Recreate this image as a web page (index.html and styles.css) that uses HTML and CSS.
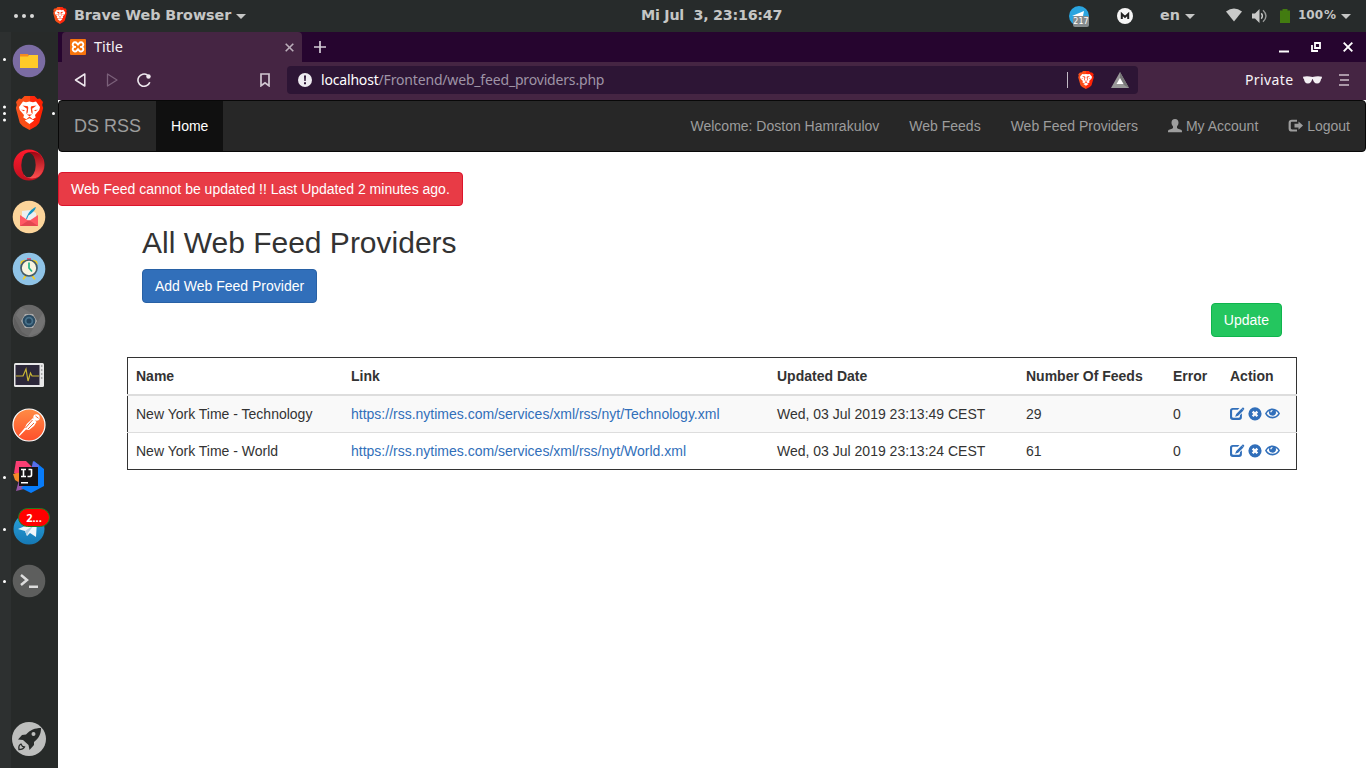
FILE: index.html
```html
<!DOCTYPE html>
<html lang="en">
<head>
<meta charset="utf-8">
<title>Title</title>
<link rel="stylesheet" href="styles.css">
</head>
<body>
<svg class="defs" width="0" height="0">
  <defs>
    <linearGradient id="brave-fill" x1="0" x2="1"><stop offset="0" stop-color="#f4511e"/><stop offset=".5" stop-color="#ff4b12"/><stop offset=".51" stop-color="#ff2a10"/><stop offset="1" stop-color="#ff2000"/></linearGradient>
    <linearGradient id="opera-fill" x1="0" x2="0" y1="0" y2="1"><stop offset="0" stop-color="#ff1b2d"/><stop offset="1" stop-color="#c0101f"/></linearGradient>
    <linearGradient id="opera-side" x1="0" x2="0" y1="0" y2="1"><stop offset="0" stop-color="#9c0612"/><stop offset="1" stop-color="#ff5050"/></linearGradient>
    <linearGradient id="post-fill" x1="0" x2="0" y1="0" y2="1"><stop offset="0" stop-color="#ff8c45"/><stop offset="1" stop-color="#ff4f2b"/></linearGradient>
    <linearGradient id="tele-fill" x1="0" x2="0" y1="0" y2="1"><stop offset="0" stop-color="#2ba3dc"/><stop offset="1" stop-color="#1679b5"/></linearGradient>
  </defs>
  <symbol id="brave" viewBox="0 0 28 34">
    <path fill="url(#brave-fill)" d="M9 0h10l3 3 2.500-.4L27.500 6l-.8 3 1 3-4 15-3 3.200L14 34l-6.700-3.800-3-3.200L.3 12l1-3L.5 6l3-3.400L6 3z"/>
    <path fill="#fff" d="M7.500 5.500l3 .8 3.500-.8 3.500.8 3-.8 4 5.500-.7 3-4.300 5 .7 2.500-3 1.800L14 20.500l-3.200 2.800-3-1.800.7-2.500-4.300-5-.7-3z"/>
    <path fill="#fff" d="M9.300 24.500L14 22.300l4.700 2.200L14 28z"/>
    <path fill="#ff3a12" d="M7 9.600l5.300.6.500 1.600-.6 4.700-1.100 1.700-.2-2.400.5-3zM21 9.600l-5.300.6-.5 1.600.6 4.700 1.100 1.700.2-2.400-.5-3zM11.300 18.500h5.400L14 20.200z"/>
    <path fill="#ff3a12" d="M5.500 13.800l3.800.2-.8 1.300zM22.500 13.800l-3.800.2.800 1.300z"/>
  </symbol>
  <symbol id="user" viewBox="0 0 14 14"><path d="M7 0c2.400 0 3.500 1.500 3.500 3.600 0 1.700-.6 2.900-1.500 3.800v1.500l1 .8 3 1.100c.7.300 1 .8 1 1.700v.8H0v-.8c0-.9.300-1.400 1-1.700l3-1.100 1-.8V7.400c-.9-.9-1.500-2.100-1.500-3.800C3.500 1.500 4.600 0 7 0z"/></symbol>
  <symbol id="logout" viewBox="0 0 15 14"><path d="M9 .8v2H4.200c-1 0-1.400.4-1.400 1.300v5c0 .9.400 1.300 1.400 1.300H9v2.200H3.900C1.800 12.600.6 11.500.6 9.400V3.900C.6 1.900 1.800.8 3.900.8zM10.500 2.400L15 6.600l-4.500 4.200V8.400H6.500V4.800h4z"/></symbol>
  <symbol id="edit" viewBox="0 0 15 14"><path d="M9.500.9L7.800 2.800H3.400c-.8 0-1.300.4-1.300 1.200v5.600c0 .8.500 1.200 1.300 1.200h5.300c.8 0 1.200-.4 1.200-1.200V8.200l2-1.900v3.900c0 1.800-1 2.700-2.800 2.700H2.800C1 12.900 0 12 0 10.200V3.700C0 1.800 1 .9 2.800.9z"/><path d="M11.600 1.500l1.900 1.900-5.400 5.400-3 1 1.100-2.900zM12.400.8c.9-.8 2.500.7 1.700 1.700l-.6.5-1.700-1.600z"/></symbol>
  <symbol id="remove" viewBox="0 0 14 14"><path fill-rule="evenodd" d="M7 .2a6.600 6.600 0 1 1 0 13.200A6.600 6.600 0 0 1 7 .2zM3.800 5.400L5.300 6.900 3.800 8.400l1.700 1.700L7 8.600l1.500 1.500 1.700-1.700-1.500-1.500 1.500-1.500-1.700-1.700L7 5.200 5.500 3.700z"/></symbol>
  <symbol id="eye" viewBox="0 0 15 14"><path fill-rule="evenodd" d="M7.500 1.500c3.500 0 6.100 2.300 7.500 5-1.400 2.900-4 4.900-7.500 4.900S1.400 9.400 0 6.500c1.400-2.700 4-5 7.500-5zM4.300 4C3.200 4.600 2.300 5.500 1.700 6.500c1.200 2 3.200 3.300 5.800 3.300s4.600-1.300 5.800-3.300c-.6-1-1.500-1.900-2.600-2.500 1 2.700-.6 4.700-3.200 4.700S3.300 6.700 4.300 4zM7.500 3c-1.500 0-2.200.9-2.200 2.200h1.300c0-.7.300-1 .9-1.100z"/></symbol>
</svg>

<header class="topbar">
  <span class="activities"><i></i><i></i><i></i></span>
  <svg class="app-logo" width="14" height="17"><use href="#brave"/></svg>
  <span class="app-name">Brave Web Browser</span><i class="caret"></i>
  <span class="clock">Mi Jul&nbsp; 3, 23:16:47</span>
  <div class="tray">
    <span class="tray-tele"><svg width="21" height="21" viewBox="0 0 21 21"><circle cx="10" cy="10" r="10" fill="#2aa5e0"/><path fill="#fff" d="M3 10l12-5-1 5z"/></svg><b>217</b></span>
    <svg class="tray-m" width="16" height="16" viewBox="0 0 16 16"><circle cx="8" cy="8" r="8" fill="#f5f5f5"/><path d="M4.800 11V6L8 9l3.200-3v5" fill="none" stroke="#222" stroke-width="2"/></svg>
    <span class="lang">en</span><i class="caret"></i>
    <svg class="wifi" width="16" height="14" viewBox="0 0 16 14"><path fill="#c8c9c8" d="M0 3.500Q8-2.500 16 3.500L8 13.500z"/></svg>
    <svg class="sound" width="16" height="14" viewBox="0 0 16 14"><path fill="#c8c9c8" d="M0 4.500h3L7.500 0v14L3 9.500H0z"/><path fill="none" stroke="#c8c9c8" stroke-width="1.400" d="M9.300 4.300q2.200 2.700 0 5.400"/><path fill="none" stroke="#999b9a" stroke-width="1.400" d="M11 1.300q6 5.700 0 11.400"/></svg>
    <svg class="battery" width="10" height="14" viewBox="0 0 10 14"><path fill="#427b10" d="M0 1.500h2.500V0h5v1.500H10V14H0z"/></svg>
    <span class="percent">100<span>%</span></span><i class="caret"></i>
  </div>
</header>

<div class="desktop">
  <nav class="dock">
    <div class="slot one"><svg width="34" height="34" viewBox="0 0 34 34"><circle cx="17" cy="17" r="16.300" fill="#7b6ca3"/><path fill="#f58a1f" d="M8 10h8l1 2v3H8z"/><path fill="#ffca28" d="M8 12.500h8l1-1.500h9v13H8z"/></svg></div>
    <div class="slot three focus"><svg width="29" height="34" viewBox="0 0 28 34"><use href="#brave"/></svg></div>
    <div class="slot"><svg width="34" height="34" viewBox="0 0 34 34"><circle cx="17" cy="17" r="15.500" fill="url(#opera-fill)"/><path fill="url(#opera-side)" d="M12 6.500C16 3 22 3 27.500 6A15.500 15.500 0 0 1 27 28.500C22 31.500 16 31 12 27.500z"/><ellipse cx="16.500" cy="17" rx="7.200" ry="12.300" fill="#272a29"/></svg></div>
    <div class="slot"><svg width="34" height="34" viewBox="0 0 34 34"><circle cx="17" cy="17" r="16.300" fill="#fcd59b"/><path fill="#eceff1" d="M10 11l9-1 5 3v9H10z"/><path fill="#ff5964" d="M8 15l9 6 9-6v11H8z"/><path fill="#e34650" d="M8 26l9-6 9 6z"/><path fill="#1595c5" d="M14 19C16 13 19 9 24 7c-1 4-4 6-7.500 8.500L15 19z"/></svg></div>
    <div class="slot"><svg width="34" height="34" viewBox="0 0 34 34"><circle cx="17" cy="17" r="16.300" fill="#8fc3e6"/><g fill="#f2cc25"><path d="M8 12.500L9 9l4-1.500 1 2zM26 12.500L25 9l-4-1.500-1 2zM13 23l-2.500 4 1.500.7 3-4zM21 23l2.500 4-1.500.7-3-4z"/></g><path fill="#d9577b" d="M15 6h4v3h-4z"/><circle cx="17" cy="16" r="8" fill="#f8f3df" stroke="#455a64" stroke-width="1.700"/><path d="M17 10.500V16l3 3.500" fill="none" stroke="#24b588" stroke-width="1.700"/></svg></div>
    <div class="slot"><svg width="34" height="34" viewBox="0 0 34 34"><circle cx="17" cy="17" r="16.300" fill="#696969"/><path fill="#737373" d="M9 3l12 7-12 7-5-6zM31 9l-9 14-6 10 12-5 5-11z"/><path fill="#5f5f5f" d="M2 13l8 15 8 5-10-3-6-8z"/><path fill="#aaa" d="M13 10h8l4 7-4 7h-8l-4-7z"/><circle cx="17" cy="17" r="6.300" fill="#294a61"/><circle cx="17" cy="17" r="4.300" fill="#48718a"/><circle cx="17" cy="17" r="2.500" fill="#234259"/></svg></div>
    <div class="slot monitor"><svg width="34" height="34" viewBox="0 0 34 34"><rect x="2" y="5" width="30" height="24" rx="1.500" fill="#e7e7e7"/><rect x="3.500" y="7" width="24" height="20" fill="#2c2739"/><path d="M4 18h7l3-7 2 12 2.500-8 1.500 3H27" fill="none" stroke="#c9b635" stroke-width="1.200"/><path stroke="#aaa" d="M29.700 7v14" stroke-width="1.500" stroke-dasharray="2 2"/></svg></div>
    <div class="slot"><svg width="34" height="34" viewBox="0 0 34 34"><circle cx="17" cy="17" r="16" fill="url(#post-fill)" stroke="#fff" stroke-width="1.200"/><circle cx="24.500" cy="9.500" r="3.200" fill="#fff"/><path fill="#fff" d="M21 10l3.500 4-2.500 4-5 4-3-.5L7.500 28l-.8-.8 6-7.200 2-4z"/><path d="M23.500 8l3 2.300M20.500 12l-7 8M22 15l-6 6" stroke="#f26435" fill="none"/></svg></div>
    <div class="slot low one"><svg width="34" height="34" viewBox="0 0 34 34"><path fill="#fa3e73" d="M4 1h10l6 6-8 11-10-5z"/><path fill="#f58b27" d="M1 14l10-2v13l-8-5z"/><path fill="#9856a7" d="M4 31l3-11 13 7z"/><path fill="#087cfa" d="M22 1l10 8v17L19 33 9 28l10-9z"/><path fill="#5a6ee8" d="M21 1l6 4-3 14-5-8z"/><rect x="7" y="7" width="19" height="19" fill="#151315"/><path d="M9 9.500h5M11.500 9v8M9 16.500h5M19.500 9v6q0 1.500-2 1.500H15.500M16.500 9.500h3" fill="none" stroke="#fff" stroke-width="1.600"/><path fill="#fff" d="M9 22h7v1.500H9z"/></svg></div>
    <div class="slot low one"><svg width="34" height="34" viewBox="0 0 34 34"><circle cx="17" cy="17" r="15.500" fill="url(#tele-fill)"/><path fill="#f2f7fb" d="M6 17L25 9l-1 16-6-4-3 3-2-5z"/><path fill="#b1cfe3" d="M13 19l9-6-6 8-1 3z"/></svg><b class="count">2...</b></div>
    <div class="slot low one"><svg width="34" height="34" viewBox="0 0 34 34"><circle cx="17" cy="17" r="16.300" fill="#5d5e5d"/><path d="M9 11l6 5-6 5" fill="none" stroke="#ddd" stroke-width="2.500"/><path fill="#ddd" d="M17 21.500h9V24h-9z"/></svg></div>
    <div class="slot apps"><svg width="34" height="34" viewBox="0 0 34 34"><circle cx="17" cy="17" r="17" fill="#bdbebd"/><path fill="#272a29" fill-rule="evenodd" d="M29 6c0 6-2 10-7 14v3l-4.500 5-1-5-5.500-5-5-.5L10 13l4-.5C18 8 23 6 29 6zM21.500 10a2 2 0 1 0 0 4 2 2 0 0 0 0-4z"/><path d="M9 22c-2 1-2.500 3-2 5.500 3 0 4.500-.5 5.500-2.500l-2-.5z" fill="none" stroke="#272a29" stroke-width="1.300"/></svg></div>
  </nav>

  <section class="browser">
    <div class="tabs">
      <div class="tab">
        <svg width="16" height="16" viewBox="0 0 16 16"><rect width="16" height="16" rx="1" fill="#f7740c"/><path d="M6 7.900H5a2.300 2.300 0 1 1 1.800-3.700L8 5.600l1.200-1.400A2.300 2.300 0 1 1 11 7.900h-1 1a2.300 2.300 0 1 1-1.800 3.700L8 10.200l-1.200 1.400A2.300 2.300 0 1 1 5 7.900z" fill="none" stroke="#fff" stroke-width="1.900"/></svg>
        <span>Title</span>
        <svg class="tab-close" width="9" height="9" viewBox="0 0 9 9"><path d="M.7.7l7.600 7.600M8.300.7L.7 8.300" stroke="#bbaeba" stroke-width="1.600"/></svg>
      </div>
      <svg class="plus" width="12" height="12" viewBox="0 0 12 12"><path d="M6 0v12M0 6h12" stroke="#d4cdd6" stroke-width="1.700"/></svg>
      <div class="window-buttons">
        <svg width="10" height="11" viewBox="0 0 10 11"><path d="M0 9.500h10" stroke="#fff" stroke-width="2"/></svg>
        <svg width="10" height="10" viewBox="0 0 10 10"><path d="M4 1h5v5H4zM1 3v6h6" fill="none" stroke="#fff" stroke-width="1.800"/></svg>
        <svg width="10" height="10" viewBox="0 0 10 10"><path d="M.7.7l8.600 8.600M9.300.7L.7 9.300" stroke="#fff" stroke-width="1.900"/></svg>
      </div>
    </div>
    <div class="toolbar">
      <svg class="back" width="12" height="14" viewBox="0 0 12 14"><path d="M10.800 1v12L1.500 7z" fill="none" stroke="#eee8ee" stroke-width="1.500" stroke-linejoin="round"/></svg>
      <svg class="forward" width="12" height="14" viewBox="0 0 12 14"><path d="M1.500 1v12L11 7z" fill="none" stroke="#7b607a" stroke-width="1.300" stroke-linejoin="round"/></svg>
      <svg class="reload" width="14" height="14" viewBox="0 0 14 14"><path d="M12.800 9.200A6.100 6.100 0 1 1 10.500 2.100" fill="none" stroke="#eee8ee" stroke-width="1.600"/><circle cx="11.500" cy="3.500" r="2.200" fill="#eee8ee"/></svg>
      <svg class="bookmark" width="10" height="14" viewBox="0 0 10 14"><path d="M1 1h8v11.800L5 9.800l-4 3z" fill="none" stroke="#d1c7d1" stroke-width="1.700"/></svg>
      <div class="address">
        <svg width="14" height="14" viewBox="0 0 14 14"><circle cx="7" cy="7" r="7" fill="#eeebf0"/><path d="M6 2.500h2L7.700 8H6.300zM6 9.300h2v2H6z" fill="#2d1535"/></svg>
        <span class="url"><b>localhost</b>/Frontend/web_feed_providers.php</span>
        <i class="divider"></i>
        <svg class="shield" width="16" height="18" viewBox="0 0 28 34" preserveAspectRatio="none"><use href="#brave" width="28" height="34"/></svg>
        <svg width="18" height="16" viewBox="0 0 18 16"><path d="M9 0l9 16H0z" fill="#999"/><path d="M9 0l9 16-5-3-4-7z" fill="#777"/><path d="M9 6l3.500 6h-7z" fill="#fff"/></svg>
      </div>
      <span class="private">Private</span>
      <svg class="glasses" width="19" height="8" viewBox="0 0 19 8"><path fill="#f3eff3" d="M0 .7Q4.500-.2 9.500 1 14.500-.2 19 .7l-.3 2h-.6c-.4 3.200-1.500 4.800-4 4.800s-3.700-1.500-4.200-4.200h-.8C8.600 6 7.400 7.500 4.900 7.500s-3.600-1.600-4-4.800H.3z"/></svg>
      <svg class="menu" width="10" height="12" viewBox="0 0 10 12"><path d="M0 1h10M1 6h9M0 11h10" stroke="#cbbfca" stroke-width="1.700"/></svg>
    </div>

    <main class="page">
      <nav class="navbar">
        <a class="brand">DS RSS</a><a class="active">Home</a>
        <div class="nav-right">
          <a>Welcome: Doston Hamrakulov</a><a>Web Feeds</a><a>Web Feed Providers</a>
          <a><svg class="glyph" width="14" height="14"><use href="#user"/></svg> My Account</a>
          <a><svg class="glyph" width="15" height="14"><use href="#logout"/></svg> Logout</a>
        </div>
      </nav>
      <a class="btn danger">Web Feed cannot be updated !! Last Updated 2 minutes ago.</a>
      <div class="container">
        <div class="heading">
          <h2>All Web Feed Providers</h2>
          <a class="btn primary">Add Web Feed Provider</a>
        </div>
        <div class="update-row"><a class="btn success">Update</a></div>
        <table class="feeds">
          <colgroup><col class="c-name"><col class="c-link"><col class="c-date"><col class="c-number"><col class="c-error"><col class="c-action"></colgroup>
          <thead><tr><th>Name</th><th>Link</th><th>Updated Date</th><th>Number Of Feeds</th><th>Error</th><th>Action</th></tr></thead>
          <tbody>
            <tr><td>New York Time - Technology</td><td><a>https://rss.nytimes.com/services/xml/rss/nyt/Technology.xml</a></td><td>Wed, 03 Jul 2019 23:13:49 CEST</td><td>29</td><td>0</td><td><div class="actions"><svg width="15" height="14"><use href="#edit"/></svg><svg width="14" height="14"><use href="#remove"/></svg><svg width="15" height="14"><use href="#eye"/></svg></div></td></tr>
            <tr><td>New York Time - World</td><td><a>https://rss.nytimes.com/services/xml/rss/nyt/World.xml</a></td><td>Wed, 03 Jul 2019 23:13:24 CEST</td><td>61</td><td>0</td><td><div class="actions"><svg width="15" height="14"><use href="#edit"/></svg><svg width="14" height="14"><use href="#remove"/></svg><svg width="15" height="14"><use href="#eye"/></svg></div></td></tr>
          </tbody>
        </table>
      </div>
    </main>
  </section>
</div>
</body>
</html>
```
FILE: styles.css
```css
* { box-sizing: border-box; }
body { margin: 0; height: 768px; overflow: hidden; background: #fff; }
svg { display: block; flex: none; }
.defs { position: absolute; }

.topbar { height: 32px; display: flex; align-items: center; background: #272b2b; color: #c5c6c5; font: bold 14.300px/30px "DejaVu Sans", sans-serif; padding: 0 15px 2px 14px; white-space: nowrap; }
.activities { display: flex; gap: 4px; width: 39px; padding-top: 2px; }
.activities i { width: 4px; height: 4px; border-radius: 50%; background: #d8d9d8; }
.app-name { margin-left: 7px; width: 162px; letter-spacing: -.05px; }
.caret { border: 5px solid transparent; border-top-color: #c5c6c5; border-bottom: 0; margin-top: 2px; flex: none; }
.app-name + .caret { margin-right: 395px; }
.clock { width: 150px; letter-spacing: -.25px; }
.tray { margin-left: auto; display: flex; align-items: center; }
.tray-tele { position: relative; margin-right: 27px; padding-top: 2px; }
.tray-tele b { position: absolute; left: 4px; top: 12px; width: 16px; height: 11px; border-radius: 2px; background: #858b8e; color: #fff; font: 8px/11px "DejaVu Sans", sans-serif; text-align: center; }
.tray-m { margin: 1px 27px 0 0; }
.lang { width: 25px; }
.wifi { margin-left: 31px; }
.sound { margin: 2px 0 0 10px; }
.battery { margin: 2px 0 0 12px; }
.percent { width: 43px; margin-left: 8px; font-size: 12px; line-height: 32px; display: flex; justify-content: space-between; padding-right: 5px; }

.desktop { display: flex; height: 736px; }
.dock { width: 58px; flex: none; display: flex; flex-direction: column; padding-top: 3px; background: linear-gradient(90deg, #2d3030 11px, #272a29 11px); }
.slot { height: 52px; display: flex; align-items: center; justify-content: center; position: relative; flex: none; }
.slot::before { content: ""; position: absolute; left: 3px; top: 23px; width: 3px; height: 3px; border-radius: 50%; background: transparent; }
.slot.one::before { background: #fff; }
.slot.low::before { top: 24.500px; }
.slot.three::before { background: #fff; box-shadow: 0 -6.500px #fff, 0 6.500px #fff; top: 24.500px; }
.slot.focus::after { content: ""; position: absolute; right: 3px; top: 24.500px; width: 3px; height: 3px; border-radius: 50%; background: #fff; }
.monitor svg { margin-top: 4px; }
.apps { margin-top: auto; margin-bottom: 3px; }
.count { position: absolute; left: 18px; top: 5px; width: 32px; height: 19px; border: 1px solid #237d1c; border-radius: 10px; background: #f00; color: #fff; font: bold 11px/17px "Open Sans", sans-serif; text-align: center; }

.browser { flex: 1; min-width: 0; }
.tabs { height: 30px; background: #26052f; padding-left: 4px; display: flex; align-items: center; font: 14.500px/28px "Noto Sans", sans-serif; }
.tab { width: 240px; height: 30px; background: #452543; color: #f3eff3; border-radius: 4px 4px 0 0; padding: 0 8px; display: flex; align-items: center; }
.tab span { margin-left: 8px; height: 30px; }
.tab-close { margin-left: auto; }
.plus { margin-left: 12px; }
.window-buttons { margin-left: auto; display: flex; gap: 22px; align-items: center; padding-right: 13px; }
.toolbar { height: 38px; background: #452543; display: flex; align-items: center; padding: 0 17px 2px 16px; font: 14px/28px "Noto Sans", sans-serif; }
.forward { margin-left: 20px; }
.reload { margin-left: 19px; }
.bookmark { margin-left: 109px; }
.address { width: 851px; height: 28px; margin-left: 17px; border-radius: 4px; background: #2d1535; padding: 0 9px 0 11px; display: flex; align-items: center; }
.url { color: #9f94a6; margin-left: 9px; letter-spacing: -.175px; }
.url b { color: #fff; font-weight: normal; }
.divider { width: 1px; height: 16px; background: #c3bac6; margin-left: auto; }
.shield { margin: 0 17px 0 10px; }
.private { color: #f7f3f7; width: 51px; margin-left: 107px; letter-spacing: .4px; }
.glasses { margin-left: 7px; }
.menu { margin-left: auto; }
.private { letter-spacing: .4px; }

.page { background: #fff; height: 668px; font: 14px/20px "Liberation Sans", Arial, sans-serif; color: #333; }
.navbar { height: 52px; background: #272727; border: 1px solid #080808; border-radius: 4px; display: flex; margin-bottom: 20px; }
.navbar a { padding: 15px; color: #9d9d9d; white-space: nowrap; }
.navbar .brand { font-size: 18px; }
.navbar .active { background: #101010; color: #fff; }
.nav-right { display: flex; margin-left: auto; }
.glyph { display: inline-block; fill: #9d9d9d; vertical-align: -2px; }
.btn { display: inline-block; padding: 6px 12px; border: 1px solid; border-radius: 4px; color: #fff; vertical-align: top; }
.danger { background: #e83b46; border-color: #dc142c; }
.primary { background: #316fba; border-color: #2861a5; }
.success { background: #24c65f; border-color: #0fb44d; }
.container { width: 1170px; margin: 20px auto 0; }
.heading { padding-left: 15px; }
h2 { font-size: 30px; line-height: 33px; font-weight: normal; margin: 0 0 10px; }
.update-row { display: flex; justify-content: flex-end; padding-right: 15px; margin-bottom: 20px; }
.feeds { width: 1169px; table-layout: fixed; border-collapse: collapse; border: 1px solid #333; }
.feeds th, .feeds td { padding: 8px; text-align: left; border-top: 1px solid #ddd; height: 37px; }
.feeds th { border-top: 0; border-bottom: 2px solid #ddd; }
.feeds tbody tr:first-child { background: #f9f9f9; }
.feeds a { color: #316fba; }
.c-name { width: 215.500px; }
.c-link { width: 426px; }
.c-date { width: 249px; }
.c-number { width: 147px; }
.c-error { width: 57px; }
.c-action { width: 74.500px; }
.actions { display: flex; gap: 3px; fill: #316fba; }
```
